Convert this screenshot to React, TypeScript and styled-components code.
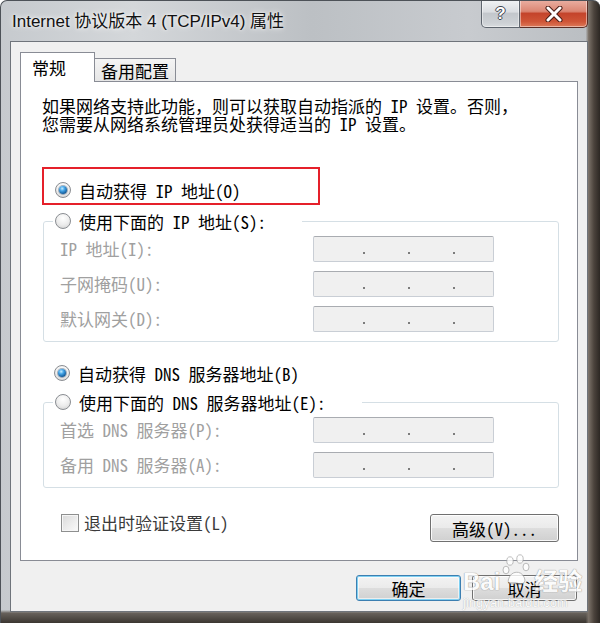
import React from 'react'
import styled, {createGlobalStyle} from 'styled-components'

const cjk = `"Noto Sans Mono CJK SC", "Noto Sans CJK SC", "Liberation Mono", monospace`

const GlobalStyle = createGlobalStyle`
  html, body {
    margin: 0;
    padding: 0;
    background: #ffffff;
  }
  body {
    font-family: ${cjk};
  }
  * {
    box-sizing: border-box;
  }
`

const Window = styled.div`
  position: relative;
  width: 600px;
  height: 623px;
  display: flex;
  flex-direction: column;
  border-top: 1px solid #4d5258;
  border-left: 1px solid #4d5258;
  border-radius: 7px 7px 0 0;
  overflow: hidden;
  background:
    linear-gradient(90deg, transparent 0 97.6%, #7a7168 98.1%, #4b433c 99%, #2c2723 100%),
    linear-gradient(180deg, transparent 0 97.9%, #67615b 98.4%, #3b3631 100%),
    linear-gradient(90deg, #c6cace 0%, #d4d7da 22%, #bcc0c4 52%, #c8cbcf 78%, #b9bdc1 100%);
`

const TitleBar = styled.div`
  height: 40px;
  display: flex;
  align-items: flex-start;
  justify-content: space-between;
`

const Title = styled.div`
  margin: 11px 0 0 11px;
  font-family: "Liberation Sans", "Noto Sans CJK SC", sans-serif;
  font-size: 17px;
  line-height: 20px;
  color: #111;
  text-shadow: 0 0 6px rgba(255, 255, 255, 0.95), 0 0 3px rgba(255, 255, 255, 0.9);
`

const Captions = styled.div`
  display: flex;
  margin: -1px 12px 0 0;
`

const CaptionButton = styled.div<{$close?: boolean}>`
  width: ${p => (p.$close ? 68 : 39)}px;
  height: 28px;
  display: flex;
  align-items: center;
  justify-content: center;
  border: 1px solid ${p => (p.$close ? '#5b2d25' : '#5e656e')};
  border-top: none;
  border-left: ${p => (p.$close ? 'none' : '1px solid #5e656e')};
  border-radius: ${p => (p.$close ? '0 0 5px 0' : '0 0 0 5px')};
  background: ${p =>
    p.$close
      ? 'linear-gradient(180deg, #eab0a3 0%, #db8673 42%, #c4442b 50%, #cf5537 80%, #dd7a5a 100%)'
      : 'linear-gradient(180deg, #f1f3f5 0%, #dadde1 44%, #c3c7cc 50%, #cdd1d5 85%, #d9dcdf 100%)'};
  box-shadow: inset 0 0 0 1px rgba(255, 255, 255, 0.45);
`

const HelpGlyph = styled.span`
  font-family: "Liberation Sans", sans-serif;
  font-weight: 700;
  font-size: 17px;
  color: #ffffff;
  text-shadow: -1px 0 #3f4650, 1px 0 #3f4650, 0 -1px #3f4650, 0 1px #3f4650;
`

const Client = styled.div`
  height: 571px;
  margin: 0 12px 0 9px;
  padding: 10px 9px 0 9px;
  border: 1px solid #6f747b;
  background: #f0f0f0;
`

const Tabs = styled.div`
  display: flex;
  align-items: flex-end;
  height: 30px;
  margin-bottom: -1px;
`

const Tab = styled.div<{$active?: boolean}>`
  position: relative;
  z-index: ${p => (p.$active ? 1 : 0)};
  height: ${p => (p.$active ? 30 : 24)}px;
  width: ${p => (p.$active ? 75 : 82)}px;
  margin-left: ${p => (p.$active ? 0 : -1)}px;
  padding-left: ${p => (p.$active ? 11 : 6)}px;
  display: flex;
  align-items: center;
  border: 1px solid #898c95;
  border-bottom: ${p => (p.$active ? 'none' : '1px solid #898c95')};
  background: ${p => (p.$active ? '#ffffff' : 'linear-gradient(180deg, #f4f4f4, #e6e6e6)')};
  font-size: 17px;
  color: #000;
`

const Panel = styled.div`
  height: 480px;
  padding: 15px 18px 0 21px;
  border: 1px solid #898c95;
  background: #ffffff;
`

const Intro = styled.p`
  margin: 0;
  font-size: 17px;
  line-height: 18px;
  color: #000;
  white-space: nowrap;
`

const Highlight = styled.div`
  width: 278px;
  height: 38px;
  margin-top: 34px;
  padding: 11px 0 0 11px;
  border: 2px solid #e5202a;
`

const RadioRow = styled.div<{$gap?: number; $indent?: number}>`
  display: flex;
  align-items: center;
  gap: 8px;
  height: 20px;
  margin-top: ${p => p.$gap ?? 0}px;
  padding-left: ${p => p.$indent ?? 0}px;
  font-size: 17px;
  color: #000;
  white-space: nowrap;
`

const Radio = styled.span<{$checked?: boolean}>`
  position: relative;
  flex: none;
  width: 16px;
  height: 16px;
  border-radius: 50%;
  border: 1px solid #8a8d92;
  background: radial-gradient(circle at 50% 30%, #ffffff 0%, #ececec 55%, #cdcdcd 100%);
  &::after {
    content: '';
    display: ${p => (p.$checked ? 'block' : 'none')};
    position: absolute;
    inset: 3px;
    border-radius: 50%;
    background: radial-gradient(circle at 40% 32%, #c4ecff 0%, #46a6e8 32%, #16609f 70%, #0b3c6a 100%);
    box-shadow: 0 0 0 1px rgba(10, 50, 90, 0.35);
  }
`

const Group = styled.fieldset<{$gap: number}>`
  margin: ${p => p.$gap}px 0 0 1px;
  padding: 5px 16px 9px;
  min-width: 0;
  border: 1px solid #d5dfe5;
  border-radius: 3px;
`

const GroupTitle = styled.legend`
  margin-left: -7px;
  padding: 0 36px 0 2px;
`

const Fields = styled.div`
  display: grid;
  grid-template-columns: 253px 181px;
  row-gap: 9px;
  align-items: center;
`

const FieldLabel = styled.span`
  font-size: 17px;
  line-height: 20px;
  color: #a0a0a0;
  white-space: nowrap;
`

const IpBox = styled.div`
  height: 26px;
  display: grid;
  grid-template-columns: repeat(3, 45px);
  padding-left: 27px;
  border: 1px solid #c9ced5;
  border-top-color: #a9acb1;
  border-radius: 2px;
  background: #f0f0f0;
`

const IpDot = styled.span`
  width: 2px;
  height: 2px;
  justify-self: center;
  align-self: end;
  margin-bottom: 7px;
  background: #7c7c7c;
`

const Footer = styled.div`
  display: flex;
  justify-content: space-between;
  align-items: flex-start;
  margin-top: 25px;
  padding-left: 19px;
`

const CheckRow = styled.label`
  display: flex;
  align-items: center;
  gap: 5px;
  height: 19px;
  font-size: 17px;
  color: #3a3a3a;
  white-space: nowrap;
`

const CheckBox = styled.span`
  width: 18px;
  height: 18px;
  border: 1px solid #8e8f8f;
  background: linear-gradient(135deg, #d9d9d9 0%, #eeeeee 60%, #fafafa 100%);
  box-shadow: inset 0 0 0 1px #f6f6f6;
`

const Button = styled.div<{$w: number; $h: number; $default?: boolean}>`
  width: ${p => p.$w}px;
  height: ${p => p.$h}px;
  display: flex;
  align-items: center;
  justify-content: center;
  border: 1px solid ${p => (p.$default ? '#3c7fb1' : '#707070')};
  border-radius: 3px;
  background: linear-gradient(180deg, #f3f3f3 0%, #ebebeb 48%, #dddddd 52%, #d0d0d0 100%);
  box-shadow: ${p =>
    p.$default
      ? 'inset 0 0 0 1px #7fd0f2, inset 0 0 0 2px rgba(255,255,255,0.6)'
      : 'inset 0 0 0 1px rgba(255,255,255,0.85)'};
  font-size: 17px;
  color: #000;
  white-space: nowrap;
`

const AdvancedButton = styled(Button)`
  margin-top: 1px;
`

const ButtonBar = styled.div`
  display: flex;
  justify-content: flex-end;
  gap: 11px;
  margin-top: 14px;
  padding-right: 1px;
`

const Watermark = styled.div`
  position: absolute;
  left: 462px;
  top: 553px;
  display: flex;
  flex-direction: column;
  align-items: flex-start;
  opacity: 0.8;
  pointer-events: none;
`

const MarkLine = styled.div`
  display: flex;
  align-items: flex-end;
  gap: 2px;
  color: #ffffff;
  text-shadow: 0 0 1px #8a8a8a, 0 0 1px #8a8a8a;
`

const MarkBig = styled.span`
  font-family: "Liberation Sans", "Noto Sans CJK SC", sans-serif;
  font-size: 24px;
  line-height: 24px;
  font-weight: 700;
`

const MarkSmall = styled.span`
  margin-top: 2px;
  font-family: "Liberation Sans", sans-serif;
  font-size: 13px;
  line-height: 13px;
  color: #ffffff;
  text-shadow: 0 0 1px #8a8a8a;
`

const Paw = () => (
  <svg width="30" height="40" viewBox="0 0 30 40">
    <g fill="#ffffff" stroke="#9a9a9a" strokeWidth="0.8">
      <ellipse cx="8" cy="7" rx="3.2" ry="4.2" />
      <ellipse cx="18" cy="5" rx="3.2" ry="4.2" />
      <ellipse cx="4" cy="16" rx="3" ry="3.8" />
      <ellipse cx="24" cy="13" rx="3" ry="3.8" />
      <path d="M7 24 C9 17 19 16 22 23 C25 29 20 31 15 29 C10 31 4 30 7 24 Z" />
    </g>
  </svg>
)

const CloseGlyph = () => (
  <svg width="18" height="16" viewBox="0 0 18 16">
    <path d="M3 2 L15 14 M15 2 L3 14" stroke="#4a1d16" strokeWidth="5" strokeLinecap="round" />
    <path d="M3 2 L15 14 M15 2 L3 14" stroke="#ffffff" strokeWidth="3" strokeLinecap="round" />
  </svg>
)

const IpField = () => (
  <IpBox>
    <IpDot />
    <IpDot />
    <IpDot />
  </IpBox>
)

export default function App() {
  return (
    <>
      <GlobalStyle />
      <Window>
        <TitleBar>
          <Title>Internet 协议版本 4 (TCP/IPv4) 属性</Title>
          <Captions>
            <CaptionButton>
              <HelpGlyph>?</HelpGlyph>
            </CaptionButton>
            <CaptionButton $close>
              <CloseGlyph />
            </CaptionButton>
          </Captions>
        </TitleBar>

        <Client>
          <Tabs>
            <Tab $active>常规</Tab>
            <Tab>备用配置</Tab>
          </Tabs>
          <Panel>
            <Intro>
              如果网络支持此功能，则可以获取自动指派的 IP 设置。否则，
              <br />
              您需要从网络系统管理员处获得适当的 IP 设置。
            </Intro>

            <Highlight>
              <RadioRow>
                <Radio $checked />
                自动获得 IP 地址(O)
              </RadioRow>
            </Highlight>

            <Group $gap={6}>
              <GroupTitle>
                <RadioRow>
                  <Radio />
                  使用下面的 IP 地址(S):
                </RadioRow>
              </GroupTitle>
              <Fields>
                <FieldLabel>IP 地址(I):</FieldLabel>
                <IpField />
                <FieldLabel>子网掩码(U):</FieldLabel>
                <IpField />
                <FieldLabel>默认网关(D):</FieldLabel>
                <IpField />
              </Fields>
            </Group>

            <RadioRow $gap={21} $indent={12}>
              <Radio $checked />
              自动获得 DNS 服务器地址(B)
            </RadioRow>

            <Group $gap={9}>
              <GroupTitle>
                <RadioRow>
                  <Radio />
                  使用下面的 DNS 服务器地址(E):
                </RadioRow>
              </GroupTitle>
              <Fields>
                <FieldLabel>首选 DNS 服务器(P):</FieldLabel>
                <IpField />
                <FieldLabel>备用 DNS 服务器(A):</FieldLabel>
                <IpField />
              </Fields>
            </Group>

            <Footer>
              <CheckRow>
                <CheckBox />
                退出时验证设置(L)
              </CheckRow>
              <AdvancedButton $w={129} $h={28}>高级(V)...</AdvancedButton>
            </Footer>
          </Panel>

          <ButtonBar>
            <Button $w={105} $h={26} $default>确定</Button>
            <Button $w={105} $h={26}>取消</Button>
          </ButtonBar>
        </Client>

        <Watermark>
          <MarkLine>
            <MarkBig>Bai</MarkBig>
            <Paw />
            <MarkBig>经验</MarkBig>
          </MarkLine>
          <MarkSmall>jingyan.baidu.com</MarkSmall>
        </Watermark>
      </Window>
    </>
  )
}
